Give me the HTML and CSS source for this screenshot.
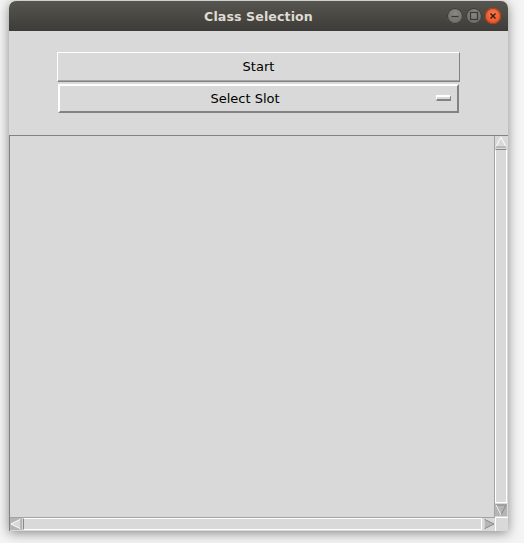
FILE: index.html
```html
<!DOCTYPE html>
<html>
<head>
<meta charset="utf-8">
<link rel="stylesheet" href="styles.css">
</head>
<body>
<div class="window">
  <div class="titlebar">
    <div class="title">Class Selection</div>
    <div class="controls">
      <span class="ctl min"><svg width="16" height="16" viewBox="0 0 16 16"><line x1="4.5" y1="8.5" x2="11.5" y2="8.5" stroke="#3a3935" stroke-width="1.2"/></svg></span>
      <span class="ctl max"><svg width="16" height="16" viewBox="0 0 16 16"><rect x="4.5" y="4.5" width="7" height="7" fill="none" stroke="#3a3935" stroke-width="1.2"/></svg></span>
      <span class="ctl close"><svg width="16" height="16" viewBox="0 0 16 16"><path d="M5.5 5.5 L10.5 10.5 M10.5 5.5 L5.5 10.5" stroke="#3a1a10" stroke-width="1.4"/></svg></span>
    </div>
  </div>
  <div class="content">
    <div class="topframe">
      <div class="btn start">Start</div>
      <div class="btn menu">Select Slot<span class="indicator"></span></div>
    </div>
    <div class="canvasarea">
      <div class="canvasrow">
        <div class="canvas"></div>
        <div class="vscroll">
          <div class="arrow up"><svg width="12" height="12" viewBox="0 0 12 12"><polygon points="6,1 11,11 1,11" fill="#d9d9d9" stroke="#ffffff"/><polyline points="11,11 1,11" fill="none" stroke="#888"/></svg></div>
          <div class="trough v"></div>
          <div class="arrow down"><svg width="12" height="12" viewBox="0 0 12 12"><polygon points="1,1 11,1 6,11" fill="#b5b5b5" stroke="#888"/><polyline points="1,1 6,11" fill="none" stroke="#fff"/></svg></div>
        </div>
      </div>
      <div class="hscroll">
        <div class="arrow left"><svg width="12" height="12" viewBox="0 0 12 12"><polygon points="1,6 11,1 11,11" fill="#d9d9d9" stroke="#ffffff"/><polyline points="11,1 11,11" fill="none" stroke="#888"/></svg></div>
        <div class="trough h"></div>
        <div class="arrow right"><svg width="12" height="12" viewBox="0 0 12 12"><polygon points="1,1 11,6 1,11" fill="#b5b5b5" stroke="#888"/><polyline points="1,11 1,1" fill="none" stroke="#fff"/></svg></div>
        <div class="corner"></div>
      </div>
    </div>
  </div>
</div>
</body>
</html>
```

FILE: styles.css
```css
html, body {
  margin: 0;
  padding: 0;
  background: #f4f4f4;
  width: 524px;
  height: 543px;
  overflow: hidden;
}
body {
  padding: 1px 0 0 9px;
  box-sizing: border-box;
}
.window {
  width: 499px;
  height: 530px;
  display: flex;
  flex-direction: column;
  border-radius: 7px 7px 0 0;
  box-shadow: 0 2px 12px rgba(0,0,0,0.45);
  background: #d9d9d9;
}
.titlebar {
  height: 30px;
  flex: none;
  border-radius: 7px 7px 0 0;
  background: linear-gradient(#57554f, #3d3c38);
  position: relative;
  display: flex;
  align-items: center;
  justify-content: center;
}
.title {
  font-family: "DejaVu Sans", "Noto Sans", sans-serif;
  font-weight: bold;
  font-size: 12.6px;
  color: #dfdbd2;
  letter-spacing: 0.1px;
}
.controls {
  position: absolute;
  right: 7px;
  top: 7px;
  display: flex;
  gap: 3px;
}
.ctl {
  width: 16px;
  height: 16px;
  border-radius: 50%;
  display: block;
  background: radial-gradient(circle at 50% 35%, #8a8883, #65635e);
  box-shadow: 0 0 0 1px #3a3935 inset;
}
.ctl svg { display: block; }
.close {
  background: radial-gradient(circle at 50% 35%, #f27a4e, #df4a1d);
  box-shadow: 0 0 0 1px #b03a15 inset;
}
.content {
  flex: 1;
  display: flex;
  flex-direction: column;
  font-family: "DejaVu Sans", "Noto Sans", sans-serif;
  font-size: 13px;
  color: #000;
}
.topframe {
  height: 104px;
  flex: none;
  box-sizing: border-box;
  padding: 21px 48px 0 48px;
  display: flex;
  flex-direction: column;
  gap: 2px;
}
.btn {
  position: relative;
  display: flex;
  align-items: center;
  justify-content: center;
  box-sizing: border-box;
  background: #d9d9d9;
}
.start {
  height: 30px;
  padding-bottom: 2px;
  border-top: 1px solid #ffffff;
  border-left: 1px solid #ffffff;
  border-bottom: 1px solid #828282;
  border-right: 1px solid #828282;
  box-shadow: inset 0 -1px 0 #a5a5a5;
}
.menu {
  height: 29px;
  margin: 0 1px;
  padding-right: 27px;
  border-top: 2px solid #ffffff;
  border-left: 2px solid #ffffff;
  border-bottom: 2px solid #828282;
  border-right: 2px solid #828282;
}
.indicator {
  position: absolute;
  right: 6px;
  top: 9px;
  width: 15px;
  height: 6px;
  box-sizing: border-box;
  border-top: 2px solid #ffffff;
  border-left: 1px solid #ffffff;
  border-bottom: 2px solid #828282;
  border-right: 1px solid #828282;
}
.canvasarea {
  flex: 1;
  display: flex;
  flex-direction: column;
  border-top: 1px solid #828282;
  border-left: 1px solid #828282;
}
.canvasrow {
  flex: 1;
  display: flex;
}
.canvas {
  flex: 1;
}
.vscroll {
  width: 13px;
  flex: none;
  display: flex;
  flex-direction: column;
  background: #d9d9d9;
  border-left: 1px solid #a3a3a3;
}
.arrow {
  width: 12px;
  height: 12px;
  flex: none;
}
.arrow svg { display: block; }
.trough.v {
  flex: 1;
  margin: 1px 0;
  border-left: 1px solid #ffffff;
  border-right: 1px solid #ffffff;
  border-top: 1px solid #888;
  border-bottom: 1px solid #fff;
  width: 10px;
}
.vscroll .down { margin-bottom: 1px; background: #b5b5b5; }
.hscroll {
  height: 13px;
  flex: none;
  display: flex;
  border-top: 1px solid #a3a3a3;
  background: #d9d9d9;
}
.hscroll .arrow { height: 12px; }
.hscroll .left { background: #b5b5b5; }
.trough.h {
  flex: 1;
  margin: 0 1px;
  border-top: 1px solid #ffffff;
  border-bottom: 1px solid #ffffff;
  border-left: 1px solid #888;
  border-right: 1px solid #fff;
  height: 10px;
}
.corner {
  width: 13px;
  flex: none;
  border-left: 1px solid #fff;
  border-top: 1px solid #fff;
  box-sizing: border-box;
  margin-top: -1px;
}
```
